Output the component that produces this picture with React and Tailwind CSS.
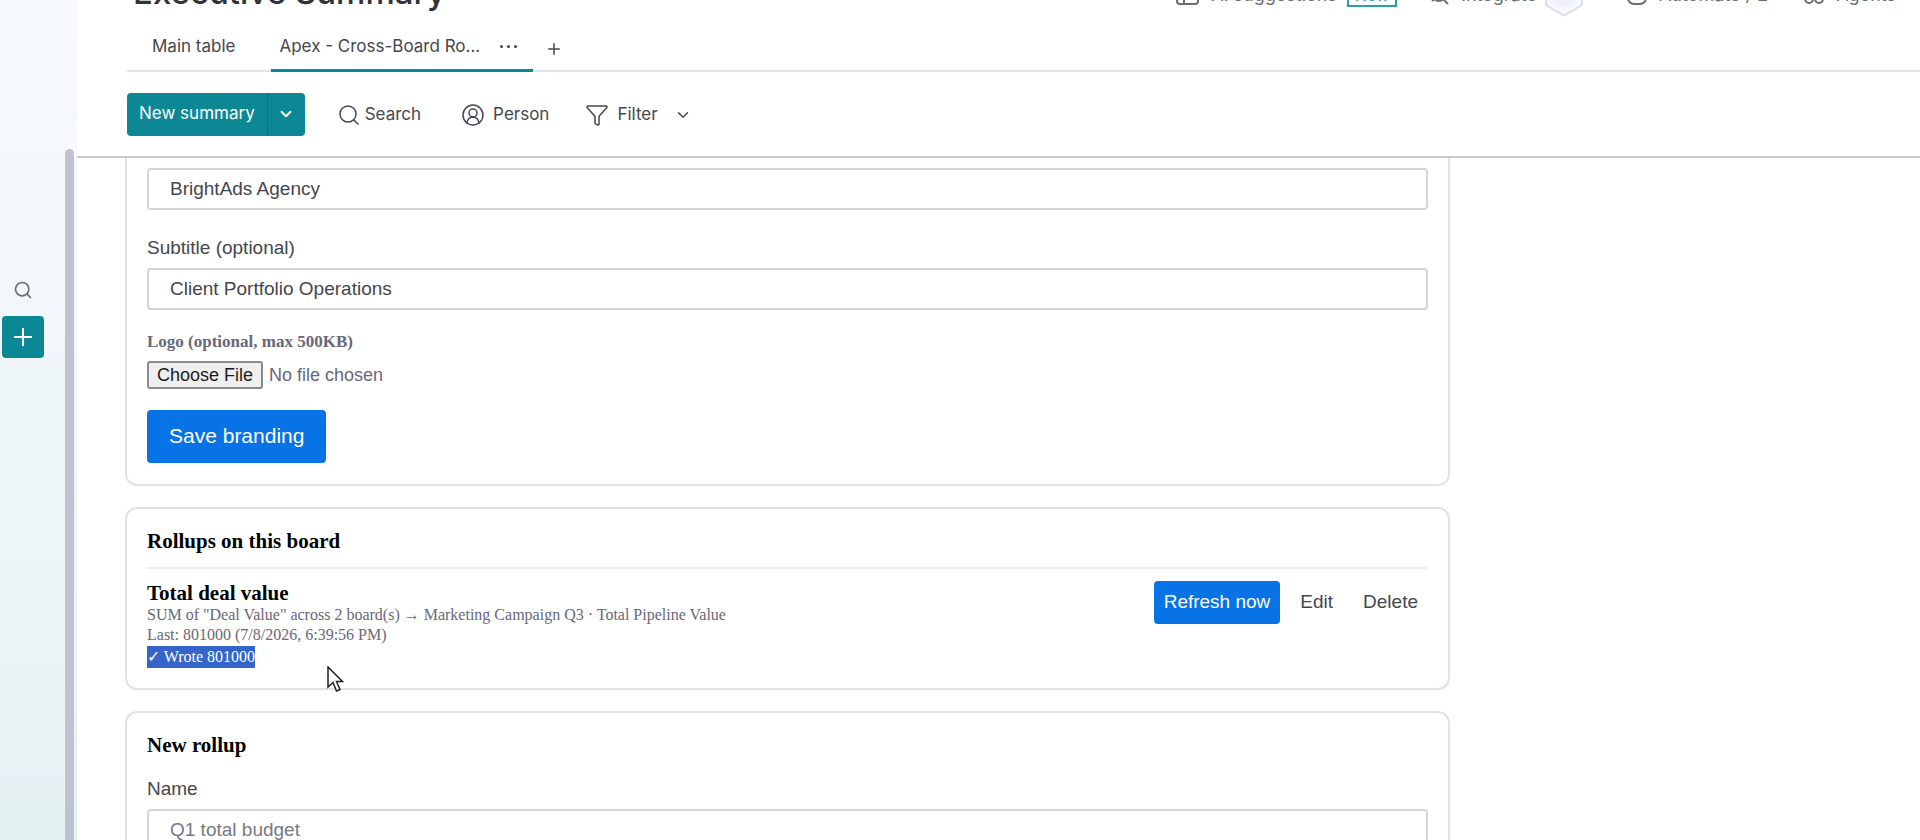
import { ChevronDown, CircleUserRound, Filter, Plus, Search } from 'lucide-react';
import clsx from 'clsx';

const tabs = [
    { name: 'Main table', active: false },
    { name: 'Apex - Cross-Board Ro...', active: true },
];

const rollups = [
    {
        name: 'Total deal value',
        source: 'SUM of "Deal Value" across 2 board(s) → Marketing Campaign Q3 · Total Pipeline Value',
        last: 'Last: 801000 (7/8/2026, 6:39:56 PM)',
        status: '✓ Wrote 801000',
    },
];

function Sidebar() {
    return (
        <aside className="flex w-[77px] shrink-0 justify-between bg-linear-to-b from-[#f7fafd] via-[#eff6f9] to-[#e4f1f3] pr-[3px]">
            <div className="flex w-[45px] flex-col items-center gap-4 pt-[280px]">
                <button aria-label="Search workspace" className="text-[#6b6d78]">
                    <Search size={20} strokeWidth={2} />
                </button>
                <button aria-label="Add item" className="flex h-[42px] w-[42px] items-center justify-center rounded bg-[#0c8794] text-white">
                    <Plus size={28} strokeWidth={1.75} />
                </button>
            </div>
            <div className="mt-[149px] w-[9px] rounded-t-full bg-[#c0c2d0]" />
        </aside>
    );
}

function BoardActions() {
    return (
        <div className="flex items-center pr-6 text-lg text-[#6a6c76]">
            <button className="flex items-center gap-3">
                <svg width="23" height="20" viewBox="0 0 23 20" fill="none" stroke="currentColor" strokeWidth="2">
                    <rect x="1" y="1" width="21" height="18" rx="3" />
                    <path d="M8 1v18M8 13h14" />
                </svg>
                AI suggestions
            </button>
            <span className="ml-2.5 border-2 border-[#2b9cac] px-1.5 text-base leading-5 text-[#2b9cac]">New</span>
            <button className="ml-8 flex items-center gap-3">
                <svg width="20" height="20" viewBox="0 0 20 20" fill="none" stroke="currentColor" strokeWidth="2">
                    <circle cx="10" cy="10" r="6" />
                    <path d="M14 14l5 5M6 14l-3 2" />
                </svg>
                Integrate
            </button>
            <svg width="38" height="44" viewBox="0 0 38 44" fill="#f7f8fd" stroke="#dcdeea" strokeWidth="2" className="ml-2">
                <path d="M19 1.500L37 12v20L19 42.500L1 32V12z" />
                <path d="M19 9l11 6.500v13L19 35L8 28.500v-13z" fill="#eef1fb" stroke="none" />
            </svg>
            <button className="ml-11 flex items-center gap-3">
                <svg width="20" height="20" viewBox="0 0 20 20" fill="none" stroke="currentColor" strokeWidth="2">
                    <path d="M1 9h18v4a6 6 0 0 1-6 6H7a6 6 0 0 1-6-6zM10 9V2" />
                </svg>
                Automate / 2
            </button>
            <button className="ml-9 flex items-center gap-3">
                <svg width="20" height="20" viewBox="0 0 20 20" fill="none" stroke="currentColor" strokeWidth="2">
                    <circle cx="5" cy="14" r="4" />
                    <circle cx="15" cy="14" r="4" />
                    <path d="M3 10l3-8M17 10l-3-8" />
                </svg>
                Agents
            </button>
        </div>
    );
}

function BoardHeader() {
    return (
        <header className="shrink-0 border-b-2 border-[#c9cad0] font-['Inter','Liberation_Sans',sans-serif] text-[#45464e]">
            <div className="-mt-[30px] flex h-[50px] items-center justify-between pl-14">
                <h1 className="flex items-center gap-3 pb-1 text-[33px] font-medium text-[#323338]">
                    Executive Summary
                    <ChevronDown size={20} strokeWidth={2} />
                </h1>
                <BoardActions />
            </div>

            <nav className="ml-[50px] flex h-[52px] items-stretch border-b-2 border-[#e1e2ea]">
                {tabs.map(tab => (
                    <div
                        key={tab.name}
                        className={clsx(
                            '-mb-0.5 flex items-center border-b-3 pt-1',
                            tab.active ? 'gap-5 border-[#0c8794] pr-4 pl-2' : 'border-transparent pr-9 pl-[25px]'
                        )}
                    >
                        <a href="#" className="text-[17px]">{tab.name}</a>
                        {tab.active && (
                            <button aria-label="View options" className="flex gap-1">
                                <span className="h-[3px] w-[3px] rounded-full bg-[#45464e]" />
                                <span className="h-[3px] w-[3px] rounded-full bg-[#45464e]" />
                                <span className="h-[3px] w-[3px] rounded-full bg-[#45464e]" />
                            </button>
                        )}
                    </div>
                ))}
                <button aria-label="Add view" className="ml-3 pt-2">
                    <Plus size={18} strokeWidth={2} />
                </button>
            </nav>

            <div className="flex h-[84px] items-center pl-[50px] text-[17px]">
                <div className="flex h-[43px] rounded bg-[#0c8794] text-white">
                    <button className="border-r border-[#08707b] px-3">New summary</button>
                    <button aria-label="More item types" className="flex w-[37px] items-center justify-center">
                        <ChevronDown size={18} strokeWidth={2.5} />
                    </button>
                </div>
                <div className="flex items-center pt-0.5">
                    <button className="ml-8 flex items-center gap-1">
                        <Search size={24} strokeWidth={1.5} />
                        Search
                    </button>
                    <button className="ml-10 flex items-center gap-2">
                        <CircleUserRound size={24} strokeWidth={1.5} />
                        Person
                    </button>
                    <button className="ml-9 flex items-center gap-2">
                        <Filter size={24} strokeWidth={1.5} />
                        Filter
                    </button>
                    <button aria-label="Filter options" className="ml-4">
                        <ChevronDown size={18} strokeWidth={2} />
                    </button>
                </div>
            </div>
        </header>
    );
}

function TextField({ id, label, ...props }) {
    return (
        <div className="flex flex-col gap-2">
            {label && <label htmlFor={id} className="text-[19px] leading-6">{label}</label>}
            <input
                id={id}
                type="text"
                className="h-[42px] w-full rounded border-2 border-[#d3d4dc] px-[21px] text-[19px] placeholder:text-[#777982]"
                {...props}
            />
        </div>
    );
}

function BrandingCard() {
    return (
        <section className="rounded-b-xl border-2 border-t-0 border-[#e0e1e9] px-5 pt-2.5 pb-[21px]">
            <TextField id="company" aria-label="Company name" defaultValue="BrightAds Agency" />
            <div className="mt-[26px]">
                <TextField id="subtitle" label="Subtitle (optional)" defaultValue="Client Portfolio Operations" />
            </div>
            <div className="mt-[22px] flex flex-col text-[#676879]">
                <label htmlFor="logo" className="font-['Liberation_Serif',serif] text-[17px] leading-5 font-bold">
                    Logo (optional, max 500KB)
                </label>
                <input
                    id="logo"
                    type="file"
                    className="mt-[9px] h-7 w-96 text-lg leading-6 file:mr-1.5 file:h-7 file:rounded-[3px] file:border-2 file:border-[#8b8b8f] file:bg-[#efefef] file:px-2 file:text-lg file:leading-6 file:font-normal file:text-[#1c1c1e]"
                />
            </div>
            <button className="mt-[21px] h-[53px] rounded bg-[#0873e6] px-[22px] pb-0.5 text-[21px] text-white">Save branding</button>
        </section>
    );
}

function RollupRow({ rollup }) {
    return (
        <div className="flex items-start justify-between border-t-2 border-[#eeeef1] pt-3">
            <div className="flex flex-col items-start font-['Liberation_Serif',serif] text-base leading-5 text-[#676879]">
                <h3 className="text-[21px] leading-6 font-bold text-black">{rollup.name}</h3>
                <p>{rollup.source}</p>
                <p>{rollup.last}</p>
                <p className="mt-px bg-[#3565cb] leading-[22px] text-white">{rollup.status}</p>
            </div>
            <div className="flex text-[19px]">
                <button className="h-[43px] rounded bg-[#0873e6] px-2.5 text-white">Refresh now</button>
                <button className="ml-2.5 h-[43px] px-2.5">Edit</button>
                <button className="ml-2.5 h-[43px] px-2.5">Delete</button>
            </div>
        </div>
    );
}

export default function App() {
    return (
        <div className="relative flex h-screen overflow-hidden bg-white">
            <Sidebar />
            <main className="flex min-w-0 flex-1 flex-col">
                <BoardHeader />
                <div className="min-h-0 flex-1 overflow-hidden pr-12 pl-12 font-['Liberation_Sans',sans-serif] text-[#45464e]">
                    <div className="flex max-w-[1325px] flex-col gap-[21px]">
                        <BrandingCard />

                        <section className="rounded-xl border-2 border-[#e0e1e9] px-5 pt-[18px] pb-5">
                            <h2 className="mb-3 font-['Liberation_Serif',serif] text-[21px] leading-7 font-bold text-black">Rollups on this board</h2>
                            {rollups.map(rollup => <RollupRow key={rollup.name} rollup={rollup} />)}
                        </section>

                        <section className="rounded-t-xl border-2 border-b-0 border-[#e0e1e9] px-5 pt-[18px] pb-5">
                            <h2 className="mb-[18px] font-['Liberation_Serif',serif] text-[21px] leading-7 font-bold text-black">New rollup</h2>
                            <TextField id="rollup-name" label="Name" placeholder="Q1 total budget" />
                        </section>
                    </div>
                </div>
            </main>

            {/* mouse pointer */}
            <svg width="17" height="27" viewBox="0 0 17 27" className="absolute top-[666px] left-[327px]">
                <path d="M1 1v20l5-4.500l3.500 8.500l3.500-1.500l-3.500-8h6z" fill="white" stroke="#222" strokeWidth="1.500" />
            </svg>
        </div>
    );
}
